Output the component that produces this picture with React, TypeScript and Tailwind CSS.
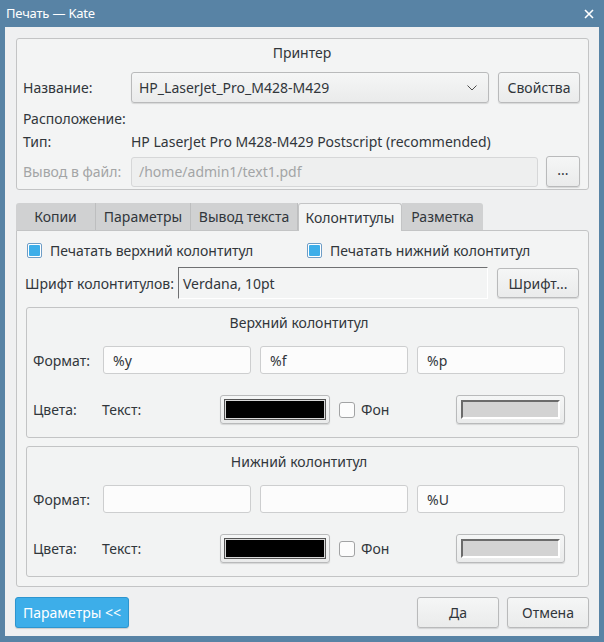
import React from "react";

const font = { fontFamily: '"Noto Sans", "DejaVu Sans", sans-serif' };

function Btn({ children, className = "" }: { children: React.ReactNode; className?: string }) {
  return (
    <div
      className={
        "flex items-center justify-center rounded-[3px] border border-[#b9babb] bg-gradient-to-b from-[#f5f6f6] to-[#eaebeb] text-[#31363b] shadow-[0_1px_1px_rgba(0,0,0,0.12)] " +
        className
      }
    >
      {children}
    </div>
  );
}

function Field({ value = "", className = "" }: { value?: string; className?: string }) {
  return (
    <div
      className={
        "flex h-[28px] items-center rounded-[3px] border border-[#cdcecf] bg-[#fcfcfc] px-[9px] text-[#31363b] " +
        className
      }
    >
      {value}
    </div>
  );
}

function Checked() {
  return (
    <div className="flex h-[15px] w-[15px] items-center justify-center rounded-[2px] border border-[#6e9dc6] bg-white">
      <div className="h-[11px] w-[11px] rounded-[1px] bg-[#3daee9]" />
    </div>
  );
}

function Unchecked() {
  return <div className="h-[16px] w-[16px] rounded-[3px] border border-[#a2a3a4] bg-[#fcfcfc]" />;
}

function ColorBtn({ swatch }: { swatch: "black" | "gray" }) {
  return (
    <Btn className="h-[29px] w-full !justify-start p-[4px]">
      {swatch === "black" ? (
        <div className="h-full w-full border border-[#d9d9d9] bg-black outline outline-1 outline-[#555]" />
      ) : (
        <div className="h-full w-full border-[2px] border-t-[#6b6b6b] border-l-[#6b6b6b] border-r-white border-b-white bg-[#d3d3d3]" />
      )}
    </Btn>
  );
}

function HFGroup({ title, fields }: { title: string; fields: string[] }) {
  return (
    <div className="rounded-[3px] border border-[#c3c4c5] bg-[#f2f3f3] pb-[13px] pl-[6px] pr-[13px] pt-[6px]">
      <div className="flex h-[16px] items-center justify-center">{title}</div>
      <div className="mt-[16px] flex h-[28px] items-center">
        <div className="w-[70px]">Формат:</div>
        <Field value={fields[0]} className="w-[148px]" />
        <Field value={fields[1]} className="ml-[9px] w-[148px]" />
        <Field value={fields[2]} className="ml-[9px] w-[148px]" />
      </div>
      <div className="mt-[21px] flex h-[29px] items-center">
        <div className="w-[69px]">Цвета:</div>
        <div className="w-[118px]">Текст:</div>
        <div className="w-[110px]">
          <ColorBtn swatch="black" />
        </div>
        <div className="ml-[9px] flex items-center">
          <Unchecked />
          <span className="ml-[6px]">Фон</span>
        </div>
        <div className="ml-auto w-[109px]">
          <ColorBtn swatch="gray" />
        </div>
      </div>
    </div>
  );
}

export default function App() {
  const tabs = [
    { label: "Копии", w: 80 },
    { label: "Параметры", w: 95 },
    { label: "Вывод текста", w: 107 },
    { label: "Колонтитулы", w: 104, active: true },
    { label: "Разметка", w: 81 },
  ];
  return (
    <div style={font} className="flex h-[642px] w-[604px] flex-col bg-[#5883a5] text-[14px] text-[#31363b]">
      <div className="flex h-[27px] shrink-0 items-center justify-between pl-[6px] pr-[10px] text-[13px] text-white">
        <span className="tracking-[-0.2px]">Печать — Kate</span>
        <svg width="10" height="10" viewBox="0 0 10 10">
          <path d="M1 1L9 9M9 1L1 9" stroke="white" strokeWidth="1.6" />
        </svg>
      </div>
      <div className="mx-[5px] mb-[6px] flex flex-1 flex-col bg-[#eff0f1] pl-[11px] pr-[10px] pt-[11px]">
        {/* Printer group */}
        <div className="rounded-[3px] border border-[#c3c4c5] bg-[#f3f4f4] pb-[2px] pl-[6px] pr-[7px] pt-[5px]">
          <div className="flex h-[16px] items-center justify-center">Принтер</div>
          <div className="mt-[12px] flex h-[31px] items-center">
            <div className="w-[108px]">Название:</div>
            <Btn className="h-[31px] w-[358px] !justify-between pl-[7px] pr-[10px]">
              <span>HP_LaserJet_Pro_M428-M429</span>
              <svg width="12" height="8" viewBox="0 0 12 8">
                <path d="M1.5 1.5L6 6L10.5 1.5" stroke="#4d4d4d" strokeWidth="1" fill="none" />
              </svg>
            </Btn>
            <Btn className="ml-[9px] h-[31px] w-[82px]">Свойства</Btn>
          </div>
          <div className="mt-[5px] flex h-[20px] items-center">Расположение:</div>
          <div className="mt-[3px] flex h-[20px] items-center">
            <div className="w-[108px]">Тип:</div>
            <div>HP LaserJet Pro M428-M429 Postscript (recommended)</div>
          </div>
          <div className="mt-[5px] flex h-[31px] items-center">
            <div className="w-[108px] text-[#a3a5a6]">Вывод в файл:</div>
            <div className="flex h-[30px] w-[407px] items-center rounded-[3px] border border-[#d6d7d8] bg-[#eeefef] px-[7px] text-[#a3a5a6]">
              /home/admin1/text1.pdf
            </div>
            <Btn className="ml-[8px] h-[31px] w-[34px] pb-[4px]">...</Btn>
          </div>
        </div>

        {/* Tabs */}
        <div className="mt-[13px] flex h-[27px] items-end">
          {tabs.map((t) =>
            t.active ? (
              <div
                key={t.label}
                style={{ width: t.w }}
                className="relative z-10 -mb-px flex h-[28px] items-center justify-center rounded-t-[3px] border border-b-0 border-[#c3c4c5] bg-[#f3f4f4]"
              >
                {t.label}
              </div>
            ) : (
              <div
                key={t.label}
                style={{ width: t.w }}
                className="flex h-[27px] items-center justify-center border-r border-[#bdbebf] bg-[#d0d1d2] first:rounded-tl-[3px] last:rounded-tr-[3px] last:border-r-0"
              >
                {t.label}
              </div>
            )
          )}
        </div>

        {/* Tab panel */}
        <div className="rounded-b-[3px] rounded-tr-[3px] border border-[#c3c4c5] bg-[#f3f4f4] pb-[9px] pl-[9px] pr-[9px] pt-[11px]">
          <div className="flex h-[16px] items-center">
            <div className="ml-[1px] flex w-[280px] items-center">
              <Checked />
              <span className="ml-[8px]">Печатать верхний колонтитул</span>
            </div>
            <div className="flex items-center">
              <Checked />
              <span className="ml-[8px]">Печатать нижний колонтитул</span>
            </div>
          </div>
          <div className="mt-[9px] flex h-[32px] items-center">
            <div className="ml-[-1px] w-[153px]">Шрифт колонтитулов:</div>
            <div className="flex h-[32px] w-[310px] items-center border border-b-white border-l-[#6f7072] border-r-white border-t-[#6f7072] bg-[#f3f4f4] px-[4px]">
              Verdana, 10pt
            </div>
            <Btn className="ml-[9px] h-[30px] w-[82px]">Шрифт...</Btn>
          </div>
          <div className="mt-[8px]">
            <HFGroup title="Верхний колонтитул" fields={["%y", "%f", "%p"]} />
          </div>
          <div className="mt-[8px]">
            <HFGroup title="Нижний колонтитул" fields={["", "", "%U"]} />
          </div>
        </div>

        {/* Bottom buttons */}
        <div className="mt-[10px] flex h-[31px] items-center">
          <div className="-ml-[1px] flex h-[31px] w-[114px] items-center justify-center rounded-[3px] border border-[#2d95cf] bg-[#3daee9] text-white shadow-[0_1px_1px_rgba(0,0,0,0.15)]">
            Параметры &lt;&lt;
          </div>
          <Btn className="ml-auto h-[31px] w-[82px]">Да</Btn>
          <Btn className="ml-[8px] h-[31px] w-[82px]">Отмена</Btn>
        </div>
      </div>
    </div>
  );
}
